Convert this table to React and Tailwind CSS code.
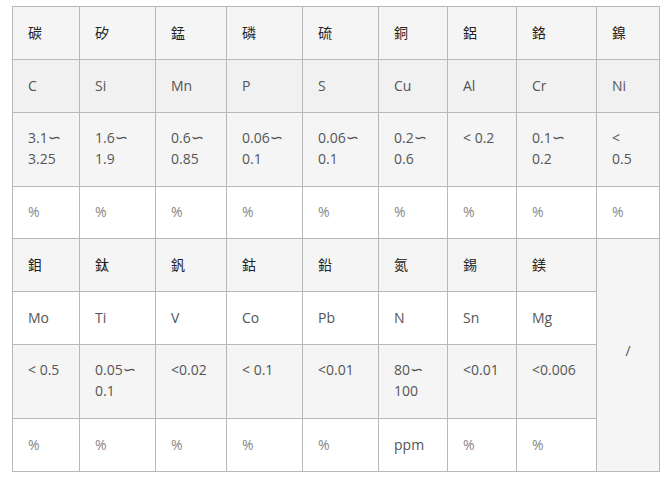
import React from "react"

const top = [
  { zh: "碳", sym: "C", val: ["3.1∽", "3.25"], unit: "%" },
  { zh: "矽", sym: "Si", val: ["1.6∽", "1.9"], unit: "%" },
  { zh: "錳", sym: "Mn", val: ["0.6∽", "0.85"], unit: "%" },
  { zh: "磷", sym: "P", val: ["0.06∽", "0.1"], unit: "%" },
  { zh: "硫", sym: "S", val: ["0.06∽", "0.1"], unit: "%" },
  { zh: "銅", sym: "Cu", val: ["0.2∽", "0.6"], unit: "%" },
  { zh: "鋁", sym: "Al", val: ["< 0.2"], unit: "%" },
  { zh: "鉻", sym: "Cr", val: ["0.1∽", "0.2"], unit: "%" },
  { zh: "鎳", sym: "Ni", val: ["<", "0.5"], unit: "%" },
]

const bottom = [
  { zh: "鉬", sym: "Mo", val: ["< 0.5"], unit: "%" },
  { zh: "鈦", sym: "Ti", val: ["0.05∽", "0.1"], unit: "%" },
  { zh: "釩", sym: "V", val: ["<0.02"], unit: "%" },
  { zh: "鈷", sym: "Co", val: ["< 0.1"], unit: "%" },
  { zh: "鉛", sym: "Pb", val: ["<0.01"], unit: "%" },
  { zh: "氮", sym: "N", val: ["80∽", "100"], unit: "ppm" },
  { zh: "錫", sym: "Sn", val: ["<0.01"], unit: "%" },
  { zh: "鎂", sym: "Mg", val: ["<0.006"], unit: "%" },
]

const cell = "border-r border-b border-[#b8b8b8] pl-[15px] pr-1 leading-[21px]"

// wave sign drawn a bit larger so the curve shows
function Line({ text }) {
  if (!text.endsWith("∽")) return <span>{text}</span>
  return (
    <span>
      {text.slice(0, -1)}
      <span className="font-['DejaVu_Sans',sans-serif] text-[16px] leading-[0]">∽</span>
    </span>
  )
}

function Row({ items, field, bg, color, start }) {
  return items.map((it, i) => (
    <div
      key={field + i}
      className={`${cell} ${bg} ${color} flex flex-col ${start ? "pt-[14px]" : "justify-center pb-[2px]"}`}
    >
      {field === "val"
        ? it.val.map((line, j) => <Line key={j} text={line} />)
        : <span className={field === "unit" && it.unit === "ppm" ? "text-[#555]" : ""}>{it[field]}</span>}
    </div>
  ))
}

export default function App() {
  return (
    <div className="min-h-[477px] bg-white pt-[6px] pl-[12px] text-[14px] font-['Open_Sans','Noto_Sans_CJK_TC',sans-serif]">
      <div className="grid w-fit grid-cols-[67px_76px_71px_76px_76px_69px_69px_80px_63px] grid-rows-[53px_53px_74px_52px] border-l border-t border-[#b8b8b8]">
        <Row items={top} field="zh" bg="bg-[#f5f5f5]" color="text-[#222] font-['Noto_Sans_CJK_TC',sans-serif]" />
        <Row items={top} field="sym" bg="bg-[#f1f1f1]" color="text-[#555]" />
        <Row items={top} field="val" bg="bg-[#f5f5f5]" color="text-[#555]" start />
        <Row items={top} field="unit" bg="bg-white" color="text-[#888]" />
      </div>
      <div className="grid w-fit grid-cols-[67px_76px_71px_76px_76px_69px_69px_80px_63px] grid-rows-[53px_53px_74px_53px] border-l border-[#b8b8b8]">
        <Row items={bottom} field="zh" bg="bg-[#f5f5f5]" color="text-[#222] font-['Noto_Sans_CJK_TC',sans-serif]" />
        <div className="col-start-9 row-start-1 row-span-4 flex items-center justify-center border-r border-b border-[#b8b8b8] bg-[#f5f5f5] pb-[10px] text-[#555]">
          /
        </div>
        <Row items={bottom} field="sym" bg="bg-white" color="text-[#555]" />
        <Row items={bottom} field="val" bg="bg-[#f5f5f5]" color="text-[#555]" start />
        <Row items={bottom} field="unit" bg="bg-white" color="text-[#888]" />
      </div>
    </div>
  )
}
